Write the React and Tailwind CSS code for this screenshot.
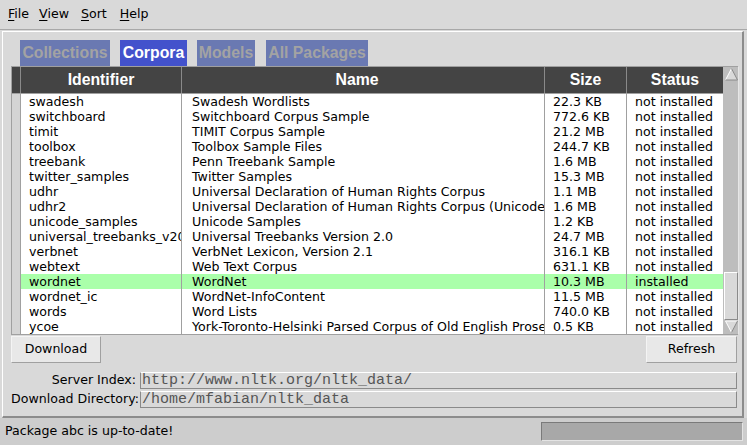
import React from 'react'

const ROWS = [
  ['swadesh', 'Swadesh Wordlists', '22.3 KB', 'not installed'],
  ['switchboard', 'Switchboard Corpus Sample', '772.6 KB', 'not installed'],
  ['timit', 'TIMIT Corpus Sample', '21.2 MB', 'not installed'],
  ['toolbox', 'Toolbox Sample Files', '244.7 KB', 'not installed'],
  ['treebank', 'Penn Treebank Sample', '1.6 MB', 'not installed'],
  ['twitter_samples', 'Twitter Samples', '15.3 MB', 'not installed'],
  ['udhr', 'Universal Declaration of Human Rights Corpus', '1.1 MB', 'not installed'],
  ['udhr2', 'Universal Declaration of Human Rights Corpus (Unicode Version)', '1.6 MB', 'not installed'],
  ['unicode_samples', 'Unicode Samples', '1.2 KB', 'not installed'],
  ['universal_treebanks_v20', 'Universal Treebanks Version 2.0', '24.7 MB', 'not installed'],
  ['verbnet', 'VerbNet Lexicon, Version 2.1', '316.1 KB', 'not installed'],
  ['webtext', 'Web Text Corpus', '631.1 KB', 'not installed'],
  ['wordnet', 'WordNet', '10.3 MB', 'installed'],
  ['wordnet_ic', 'WordNet-InfoContent', '11.5 MB', 'not installed'],
  ['words', 'Word Lists', '740.0 KB', 'not installed'],
  ['ycoe', 'York-Toronto-Helsinki Parsed Corpus of Old English Prose', '0.5 KB', 'not installed'],
]

const TABS = [
  { label: 'Collections', w: 'w-[90px]', ml: 'ml-[9px]' },
  { label: 'Corpora', w: 'w-[67px]', ml: 'ml-[10px]', active: true },
  { label: 'Models', w: 'w-[58px]', ml: 'ml-[10px]' },
  { label: 'All Packages', w: 'w-[102px]', ml: 'ml-[11px]' },
]

function Arrow({ up }) {
  return (
    <svg width="15" height="14" viewBox="0 0 15 14" className="block">
      {up ? (
        <>
          <polygon points="7.5,1.5 1.5,13 13.5,13" fill="#d9d9d9" />
          <line x1="7.5" y1="1.5" x2="1.5" y2="13" stroke="#ffffff" strokeWidth="1" />
          <line x1="1.5" y1="13" x2="13.5" y2="13" stroke="#8a8a8a" strokeWidth="1" />
          <line x1="7.5" y1="1.5" x2="13.5" y2="13" stroke="#8a8a8a" strokeWidth="1" />
        </>
      ) : (
        <>
          <polygon points="1.5,1 13.5,1 7.5,12.5" fill="#d9d9d9" />
          <line x1="1.5" y1="1" x2="13.5" y2="1" stroke="#ffffff" strokeWidth="1" />
          <line x1="1.5" y1="1" x2="7.5" y2="12.5" stroke="#ffffff" strokeWidth="1" />
          <line x1="7.5" y1="12.5" x2="13.5" y2="1" stroke="#8a8a8a" strokeWidth="1" />
        </>
      )}
    </svg>
  )
}

function Menu({ label, ml }) {
  return (
    <span className={`${ml} text-[12.6px] text-black`}>
      <span className="underline underline-offset-2">{label[0]}</span>
      {label.slice(1)}
    </span>
  )
}

export default function App() {
  return (
    <div className="w-[747px] h-[445px] bg-[#d9d9d9] flex flex-col overflow-hidden font-['DejaVu_Sans',sans-serif] text-black">
      {/* menu bar */}
      <div className="h-[30px] flex items-center border-b border-[#a8a8a8] shrink-0">
        <Menu label="File" ml="ml-[8px]" />
        <Menu label="View" ml="ml-[10px]" />
        <Menu label="Sort" ml="ml-[12px]" />
        <Menu label="Help" ml="ml-[13px]" />
      </div>

      {/* main frame */}
      <div className="ml-[2px] mt-[1px] w-[742px] flex-1 flex flex-col border-t border-l border-white border-r-2 border-b-2 border-r-[#8c8c8c] border-b-[#8c8c8c] pl-[8px] pr-[3px] pt-[8px]">
        {/* tabs */}
        <div className="flex h-[26px] shrink-0">
          {TABS.map(t => (
            <div
              key={t.label}
              className={`${t.w} ${t.ml} h-[26px] flex items-center justify-center font-['Liberation_Sans',sans-serif] font-bold text-[15.8px] ${t.active ? 'bg-[#4352cc] text-white' : 'bg-[#6a79b2] text-[#a3a3a3]'}`}
            >
              {t.label}
            </div>
          ))}
        </div>

        {/* table */}
        <div className="flex w-[727px] border border-[#a0a0a0] border-r-0 shrink-0">
          <div className="flex flex-col">
            {/* header */}
            <div className="flex h-[27px] bg-[#444444] text-white font-['Liberation_Sans',sans-serif] font-bold text-[15.8px] border-b border-[#a0a0a0]">
              <div className="w-[9px] border-r border-[#8a8a8a]" />
              <div className="w-[161px] border-r border-[#8a8a8a] flex items-center justify-center">Identifier</div>
              <div className="w-[363px] border-r border-[#8a8a8a] flex items-center justify-center pr-[12px]">Name</div>
              <div className="w-[82px] border-r border-[#8a8a8a] flex items-center justify-center">Size</div>
              <div className="w-[96px] flex items-center justify-center">Status</div>
            </div>
            {/* rows */}
            {ROWS.map(r => {
              const hl = r[3] === 'installed'
              const bg = hl ? 'bg-[#aaffaa]' : 'bg-white'
              return (
                <div key={r[0]} className="flex h-[15px] text-[12.6px] leading-[15px]">
                  <div className="w-[9px] bg-[#d4d4d4] border-r border-[#a0a0a0]" />
                  <div className={`w-[161px] ${bg} border-r border-[#a0a0a0] pl-[8px] overflow-hidden whitespace-nowrap`}>{r[0]}</div>
                  <div className={`w-[363px] ${bg} border-r border-[#a0a0a0] pl-[10px] overflow-hidden whitespace-nowrap`}>{r[1]}</div>
                  <div className={`w-[82px] ${bg} border-r border-[#a0a0a0] pl-[8px] overflow-hidden whitespace-nowrap`}>{r[2]}</div>
                  <div className={`w-[96px] ${bg} pl-[8px] overflow-hidden whitespace-nowrap`}>{r[3]}</div>
                </div>
              )
            })}
          </div>
          {/* scrollbar */}
          <div className="w-[16px] flex flex-col bg-[#bdbdbd] border-r border-[#e6e6e6] pl-[1px]">
            <Arrow up />
            <div className="flex-1" />
            <div className="h-[48px] bg-[#d9d9d9] border border-[#8a8a8a] border-t-white border-l-white" />
            <Arrow />
          </div>
        </div>

        {/* buttons */}
        <div className="flex justify-between mt-[1px] pr-[2px] shrink-0">
          <button className="w-[90px] h-[27px] bg-[#e8e8e8] border border-[#a0a0a0] border-t-[#f4f4f4] border-l-[#f4f4f4] text-[12.6px]">Download</button>
          <button className="w-[91px] h-[27px] bg-[#e8e8e8] border border-[#a0a0a0] border-t-[#f4f4f4] border-l-[#f4f4f4] text-[12.6px]">Refresh</button>
        </div>

        {/* entries */}
        <div className="flex flex-col gap-[2px] mt-[9px] pr-[2px] shrink-0">
          {[
            ['Server Index:', 'http://www.nltk.org/nltk_data/'],
            ['Download Directory:', '/home/mfabian/nltk_data'],
          ].map(([label, value]) => (
            <div key={label} className="flex items-center h-[17px]">
              <div className="w-[126px] text-right text-[12.6px] pr-[1px] whitespace-nowrap">{label}</div>
              <div className="flex-1 ml-[3px] h-[17px] border border-[#8a8a8a] border-t-white bg-[#d9d9d9] flex items-center pl-[1px] font-['Liberation_Mono',monospace] text-[15px] text-[#555555] leading-none overflow-hidden whitespace-nowrap">
                {value}
              </div>
            </div>
          ))}
        </div>
      </div>

      {/* status bar */}
      <div className="h-[27px] shrink-0 bg-[#cdcdcd] flex items-center">
        <span className="ml-[5px] text-[12.6px]">Package abc is up-to-date!</span>
        <div className="ml-auto mr-[4px] w-[202px] h-[19px] bg-[#a8a8a8] border border-[#e4e4e4] border-t-[#7a7a7a] border-l-[#7a7a7a]" />
      </div>
    </div>
  )
}
